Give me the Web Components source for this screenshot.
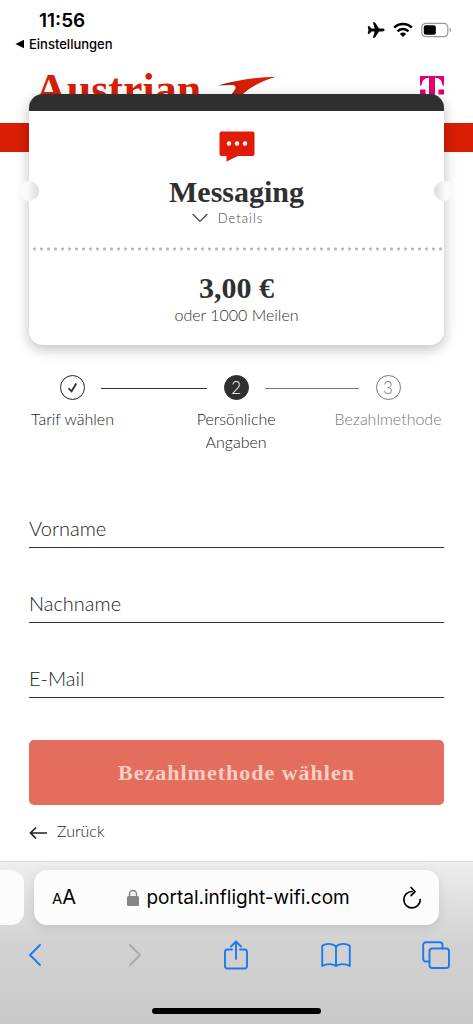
<!DOCTYPE html>
<html lang="de">
<head>
<meta charset="utf-8">
<meta name="viewport" content="width=device-width, initial-scale=1">
<title>Austrian – Persönliche Angaben</title>
<style>
  html { background: #fff; }
  body { margin: 0; }
</style>
</head>
<body>
<wifi-app></wifi-app>

<script>
const define = (name, html, setup) => {
  const template = document.createElement('template');
  template.innerHTML = '<style>*,*::before,*::after{box-sizing:border-box}svg{display:block}</style>' + html;
  customElements.define(name, class extends HTMLElement {
    constructor() {
      super();
      this.attachShadow({ mode: 'open' }).append(template.content.cloneNode(true));
    }
    connectedCallback() { if (setup) setup(this, this.shadowRoot); }
  });
};

define('status-bar', `
<style>
  :host { display: flex; justify-content: space-between; padding: 10px 21px 0 15px; height: 58px; color: #000; font-family: Inter, "Liberation Sans", sans-serif; }
  .time { padding-left: 24px; font-size: 19px; line-height: 22px; font-weight: 600; }
  a { display: flex; align-items: center; gap: 4px; margin-top: 3px; font-size: 13px; line-height: 18px; font-weight: 500; color: inherit; text-decoration: none; }
  .icons { display: flex; align-items: center; gap: 8px; height: 40px; }
</style>
<div>
  <div class="time">11:56</div>
  <a href="#"><svg width="10" height="10" viewBox="0 0 10 10"><path d="M0.5 5 9 .8v8.4z"/></svg>Einstellungen</a>
</div>
<div class="icons">
  <svg width="18" height="16" viewBox="0 0 18 16"><path d="M17.6 8c0 .9-1.100 1.400-2.300 1.400h-3.300L7.900 15.700H5.900l1.800-6.300H4.300L2.500 11.800H.7L1.500 8 .7 4.200h1.800l1.800 2.400h3.400L5.900.3h2l4.100 6.300h3.300c1.200 0 2.300.5 2.300 1.400z"/></svg>
  <svg width="20" height="16" viewBox="0 0 20 16"><g fill="none" stroke="#000" stroke-width="2.500"><path d="M1.200 5.600a12.500 12.500 0 0 1 17.600 0"/><path d="M4.500 9.300a7.800 7.800 0 0 1 11 0"/></g><path d="M10 15l-3.100-3.100a4.400 4.400 0 0 1 6.200 0z"/></svg>
  <svg width="31" height="16" viewBox="0 0 31 16"><rect x=".8" y="1.300" width="26" height="13.400" rx="4" fill="none" stroke="#999" stroke-width="1.200"/><rect x="2.800" y="3.200" width="12" height="9.600" rx="2"/><path d="M28.600 5.800c2 .7 2 3.700 0 4.400z" fill="#999"/></svg>
</div>`);

define('site-header', `
<style>
  :host { display: block; }
  .brand { display: flex; align-items: flex-start; gap: 16px; height: 65px; padding: 8px 29px 0 35px; }
  .name { font: bold 44px/48px "Liberation Serif", serif; color: #d81e05; }
  .arrow { margin-top: 10px; }
  .partner { margin: 10px 0 0 auto; }
  .band { height: 29px; background: #d81e05; }
</style>
<div class="brand">
  <span class="name">Austrian</span>
  <svg class="arrow" width="60" height="36" viewBox="0 0 60 36"><defs><linearGradient id="g"><stop offset="0" stop-color="#7c2018"/><stop offset=".4" stop-color="#d81e05"/></linearGradient></defs><path d="M1 9.500Q28 1.500 59 .8 38 7 26 18L20 28 2 34 17 15Q21 9.500 15 9z" fill="url(#g)"/></svg>
  <svg class="partner" width="24" height="28" viewBox="0 0 24 28"><path fill="#e20074" d="M0 0h24v9.500h-1.500C22 4.500 19.500 2 15 1.800V22h3v2H6v-2h3V1.800C4.500 2 2 4.500 1.500 9.500H0zM0 13.500h5.500v5H0zM18.500 13.500H24v5h-5.500z"/></svg>
</div>
<div class="band"></div>`);

define('tariff-card', `
<style>
  :host { display: block; position: relative; margin: -58px 29px 0; border-radius: 14px; background: #fff; border-top: 17px solid #303030; box-shadow: 0 4px 14px rgba(0,0,0,.26); text-align: center; color: #303030; }
  .notch { position: absolute; top: 70px; width: 20px; height: 20px; border-radius: 50%; }
  .left { left: -10px; background: linear-gradient(90deg, #fafafa 45%, #f0f0f0 60%, #dcdcdc); }
  .right { right: -10px; background: linear-gradient(270deg, #fafafa 45%, #f0f0f0 60%, #dcdcdc); }
  .top { display: flex; flex-direction: column; align-items: center; padding: 20px 16px; }
  h1, .price { margin: 0; font: bold 30px/34px "Liberation Serif", serif; }
  h1 { margin-top: 13px; }
  button { display: flex; align-items: center; gap: 10px; margin-right: 18px; padding: 0; border: 0; background: none; color: #444; font: 300 13px/18px Lato, "Open Sans", sans-serif; letter-spacing: 1px; }
  .dots { height: 4px; margin: 0 2px; background: radial-gradient(circle at center, #b4b4b4 1px, transparent 2px) 0 0 / 7px 4px repeat-x; }
  .bottom { padding: 20px 16px; }
  .miles { margin: 0; font-size: 16px; line-height: 20px; }
</style>
<span class="notch left"></span><span class="notch right"></span>
<div class="top">
  <svg width="36" height="31" viewBox="0 0 36 31"><path fill="#e01c08" d="M2.500.5h31a2 2 0 0 1 2 2V23a2 2 0 0 1-2 2H19L7.500 30.500V25h-5a2 2 0 0 1-2-2V2.500a2 2 0 0 1 2-2z"/><g fill="#fff"><circle cx="10" cy="12.500" r="2.200"/><circle cx="18" cy="12.500" r="2.200"/><circle cx="26" cy="12.500" r="2.200"/></g></svg>
  <h1><slot name="title"></slot></h1>
  <button type="button"><svg width="16" height="10" viewBox="0 0 16 10"><path d="M.7 1 8 8.500 15.300 1" fill="none" stroke="#444" stroke-width="1.200"/></svg>Details</button>
</div>
<div class="dots"></div>
<div class="bottom">
  <div class="price"><slot name="price"></slot></div>
  <p class="miles"><slot name="miles"></slot></p>
</div>`);

define('progress-step', `
<style>
  :host { display: flex; flex-direction: column; align-items: center; gap: 7px; text-align: center; font-size: 16px; line-height: 23px; color: #222; }
  .mark { display: flex; align-items: center; justify-content: center; width: 25px; height: 25px; border: 1px solid currentColor; border-radius: 50%; font-size: 17px; }
  :host([state=current]) .mark { background: #303030; border-color: #303030; color: #fff; }
  :host([state=next]) { color: #777; }
</style>
<span class="mark"><slot name="mark"></slot></span>
<span><slot></slot></span>`);

define('progress-steps', `
<style>
  :host { display: flex; margin: 30px 29px 0; }
  .first { width: 87px; }
  .second { width: 84px; }
  .third { width: 112px; }
  i { height: 1px; }
  i.done { flex: 104; background: #303030; margin: 13px -13px 0 -15px; }
  i.later { flex: 92; margin: 13px -27px 0 -13px; background: #777; }
</style>
<progress-step class="first"><svg slot="mark" width="13" height="13" viewBox="0 0 13 13"><path d="M2.500 7.300 5.600 10.300 10.300 2.500" fill="none" stroke="#303030" stroke-width="1.800"/></svg>Tarif wählen</progress-step>
<i class="done"></i>
<progress-step class="second" state="current"><span slot="mark">2</span>Persönliche Angaben</progress-step>
<i class="later"></i>
<progress-step class="third" state="next"><span slot="mark">3</span>Bezahlmethode</progress-step>`);

define('text-field', `
<style>
  :host { display: grid; height: 38px; border-bottom: 1px solid #303030; }
  label, input { grid-area: 1 / 1; font: 300 20px/24px Lato, "Open Sans", sans-serif; color: #222; }
  label { padding-top: 6px; }
  input { width: 100%; height: 37px; margin: 0; padding: 0; border: 0; outline: 0; background: none; }
  :host(:focus-within) label { font-size: 12px; line-height: 12px; padding: 0; }
</style>
<label for="field"></label><input id="field">`,
(host, root) => {
  root.querySelector('label').textContent = host.getAttribute('label');
  root.querySelector('input').type = host.getAttribute('type') || 'text';
});

define('details-form', `
<style>
  :host { display: block; margin: 57px 29px 0; }
  form { display: flex; flex-direction: column; gap: 37px; }
  button { height: 65px; margin-top: 5px; border: 0; border-radius: 5px; background: #e56d5d; color: #fbcfc1; font: bold 22px/28px "Liberation Serif", serif; letter-spacing: 1px; }
  a { display: inline-flex; align-items: center; gap: 9px; margin: 15px 0; color: #222; text-decoration: none; font-size: 16px; line-height: 22px; }
  a svg { margin-top: 4px; }
</style>
<form>
  <text-field label="Vorname"></text-field>
  <text-field label="Nachname"></text-field>
  <text-field label="E-Mail" type="email"></text-field>
  <button type="button">Bezahlmethode wählen</button>
</form>
<a href="#"><svg width="19" height="14" viewBox="0 0 19 14"><path d="M18 7H1.800M7 1.500 1.500 7 7 12.500" fill="none" stroke="#222" stroke-width="1.700"/></svg>Zurück</a>`);

define('browser-bar', `
<style>
  :host { display: block; margin-top: auto; padding: 8px 0 10px; overflow: hidden; border-top: 1px solid #dcdcdc; background: linear-gradient(#eeeeef, #d2d2d3 50%, #c9c9c9); font-family: Inter, "Liberation Sans", sans-serif; }
  .tabs { display: flex; gap: 10px; height: 55px; }
  .peek { width: 24px; border-radius: 0 13px 13px 0; background: #fcfcfc; }
  .address { flex: 1; display: flex; align-items: center; justify-content: space-between; margin-right: 34px; padding: 0 16px 0 18px; border-radius: 13px; background: #fcfcfc; box-shadow: 0 3px 12px rgba(0,0,0,.1); }
  button { display: flex; align-items: center; padding: 0; border: 0; background: none; color: #000; font: 400 20px/26px Inter, "Liberation Sans", sans-serif; }
  .size { align-items: baseline; }
  .size small { font-size: 15px; }
  .url { gap: 7px; }
  .address .url { font-size: 19px; }
  nav { display: flex; justify-content: space-between; padding: 13px 21px 0 19px; }
  nav button { width: 32px; height: 34px; justify-content: center; }
  .home { width: 169px; height: 6px; margin: 36px auto 0; border-radius: 3px; background: #000; }
  nav svg { fill: none; stroke: #1c7af0; stroke-width: 1.900; stroke-linejoin: round; stroke-linecap: round; }
  nav .off { stroke: #aaa; }
</style>
<div class="tabs">
  <div class="peek"></div>
  <div class="address">
    <button class="size" type="button" aria-label="Textgröße"><small>A</small>A</button>
    <button class="url" type="button"><svg width="12" height="18" viewBox="0 0 12 18"><rect y="7" width="12" height="10" rx="1.500" fill="#858585"/><path d="M2.500 8V5a3.500 3.500 0 0 1 7 0v3" fill="none" stroke="#858585" stroke-width="1.500"/></svg>portal.inflight-wifi.com</button>
    <button type="button" aria-label="Neu laden"><svg width="22" height="26" viewBox="0 0 22 26"><path d="M11 6.500A8.200 8.200 0 1 0 19.200 14.500M10 2.500 14 6.600 10 10.700" fill="none" stroke="#000" stroke-width="1.700" stroke-linecap="round" stroke-linejoin="round"/></svg></button>
  </div>
</div>
<nav>
  <button type="button" aria-label="Zurück"><svg width="14" height="24" viewBox="0 0 14 24"><path d="M12 2 2 12 12 22"/></svg></button>
  <button type="button" aria-label="Vor"><svg class="off" width="14" height="24" viewBox="0 0 14 24"><path d="M2 2 12 12 2 22"/></svg></button>
  <button type="button" aria-label="Teilen"><svg width="26" height="32" viewBox="0 0 26 32"><path d="M9 10.500H4.500a2.500 2.500 0 0 0-2.500 2.500v14a2.500 2.500 0 0 0 2.500 2.500h17a2.500 2.500 0 0 0 2.500-2.500V13a2.500 2.500 0 0 0-2.500-2.500H17M13 20V2.500M8 7.500 13 2.500 18 7.500"/></svg></button>
  <button type="button" aria-label="Lesezeichen"><svg width="30" height="26" viewBox="0 0 30 26"><path d="M15 4.500C11.500 1.300 5 1 1.200 3.800V24C5.500 21.500 11.500 21.500 15 24 18.500 21.500 24.500 21.500 28.800 24V3.800C25 1 18.500 1.300 15 4.500zV24"/></svg></button>
  <button type="button" aria-label="Tabs"><svg width="30" height="30" viewBox="0 0 30 30"><path d="M8.500 21.500H5A2.800 2.800 0 0 1 2.200 18.700V5A2.800 2.800 0 0 1 5 2.200H18.700A2.800 2.800 0 0 1 21.500 5V8.500"/><rect x="8.500" y="8.500" width="19.500" height="19.500" rx="2.800"/></svg></button>
</nav>
<div class="home"></div>`);

define('wifi-app', `
<style>
  :host { display: flex; flex-direction: column; min-height: 100vh; background: #fff; color: #303030; font-family: Lato, "Open Sans", sans-serif; font-weight: 300; }
</style>
<status-bar></status-bar>
<site-header></site-header>
<tariff-card>
  <span slot="title">Messaging</span>
  <span slot="price">3,00 €</span>
  <span slot="miles">oder 1000 Meilen</span>
</tariff-card>
<progress-steps></progress-steps>
<details-form></details-form>
<browser-bar></browser-bar>`);
</script>
</body>
</html>
